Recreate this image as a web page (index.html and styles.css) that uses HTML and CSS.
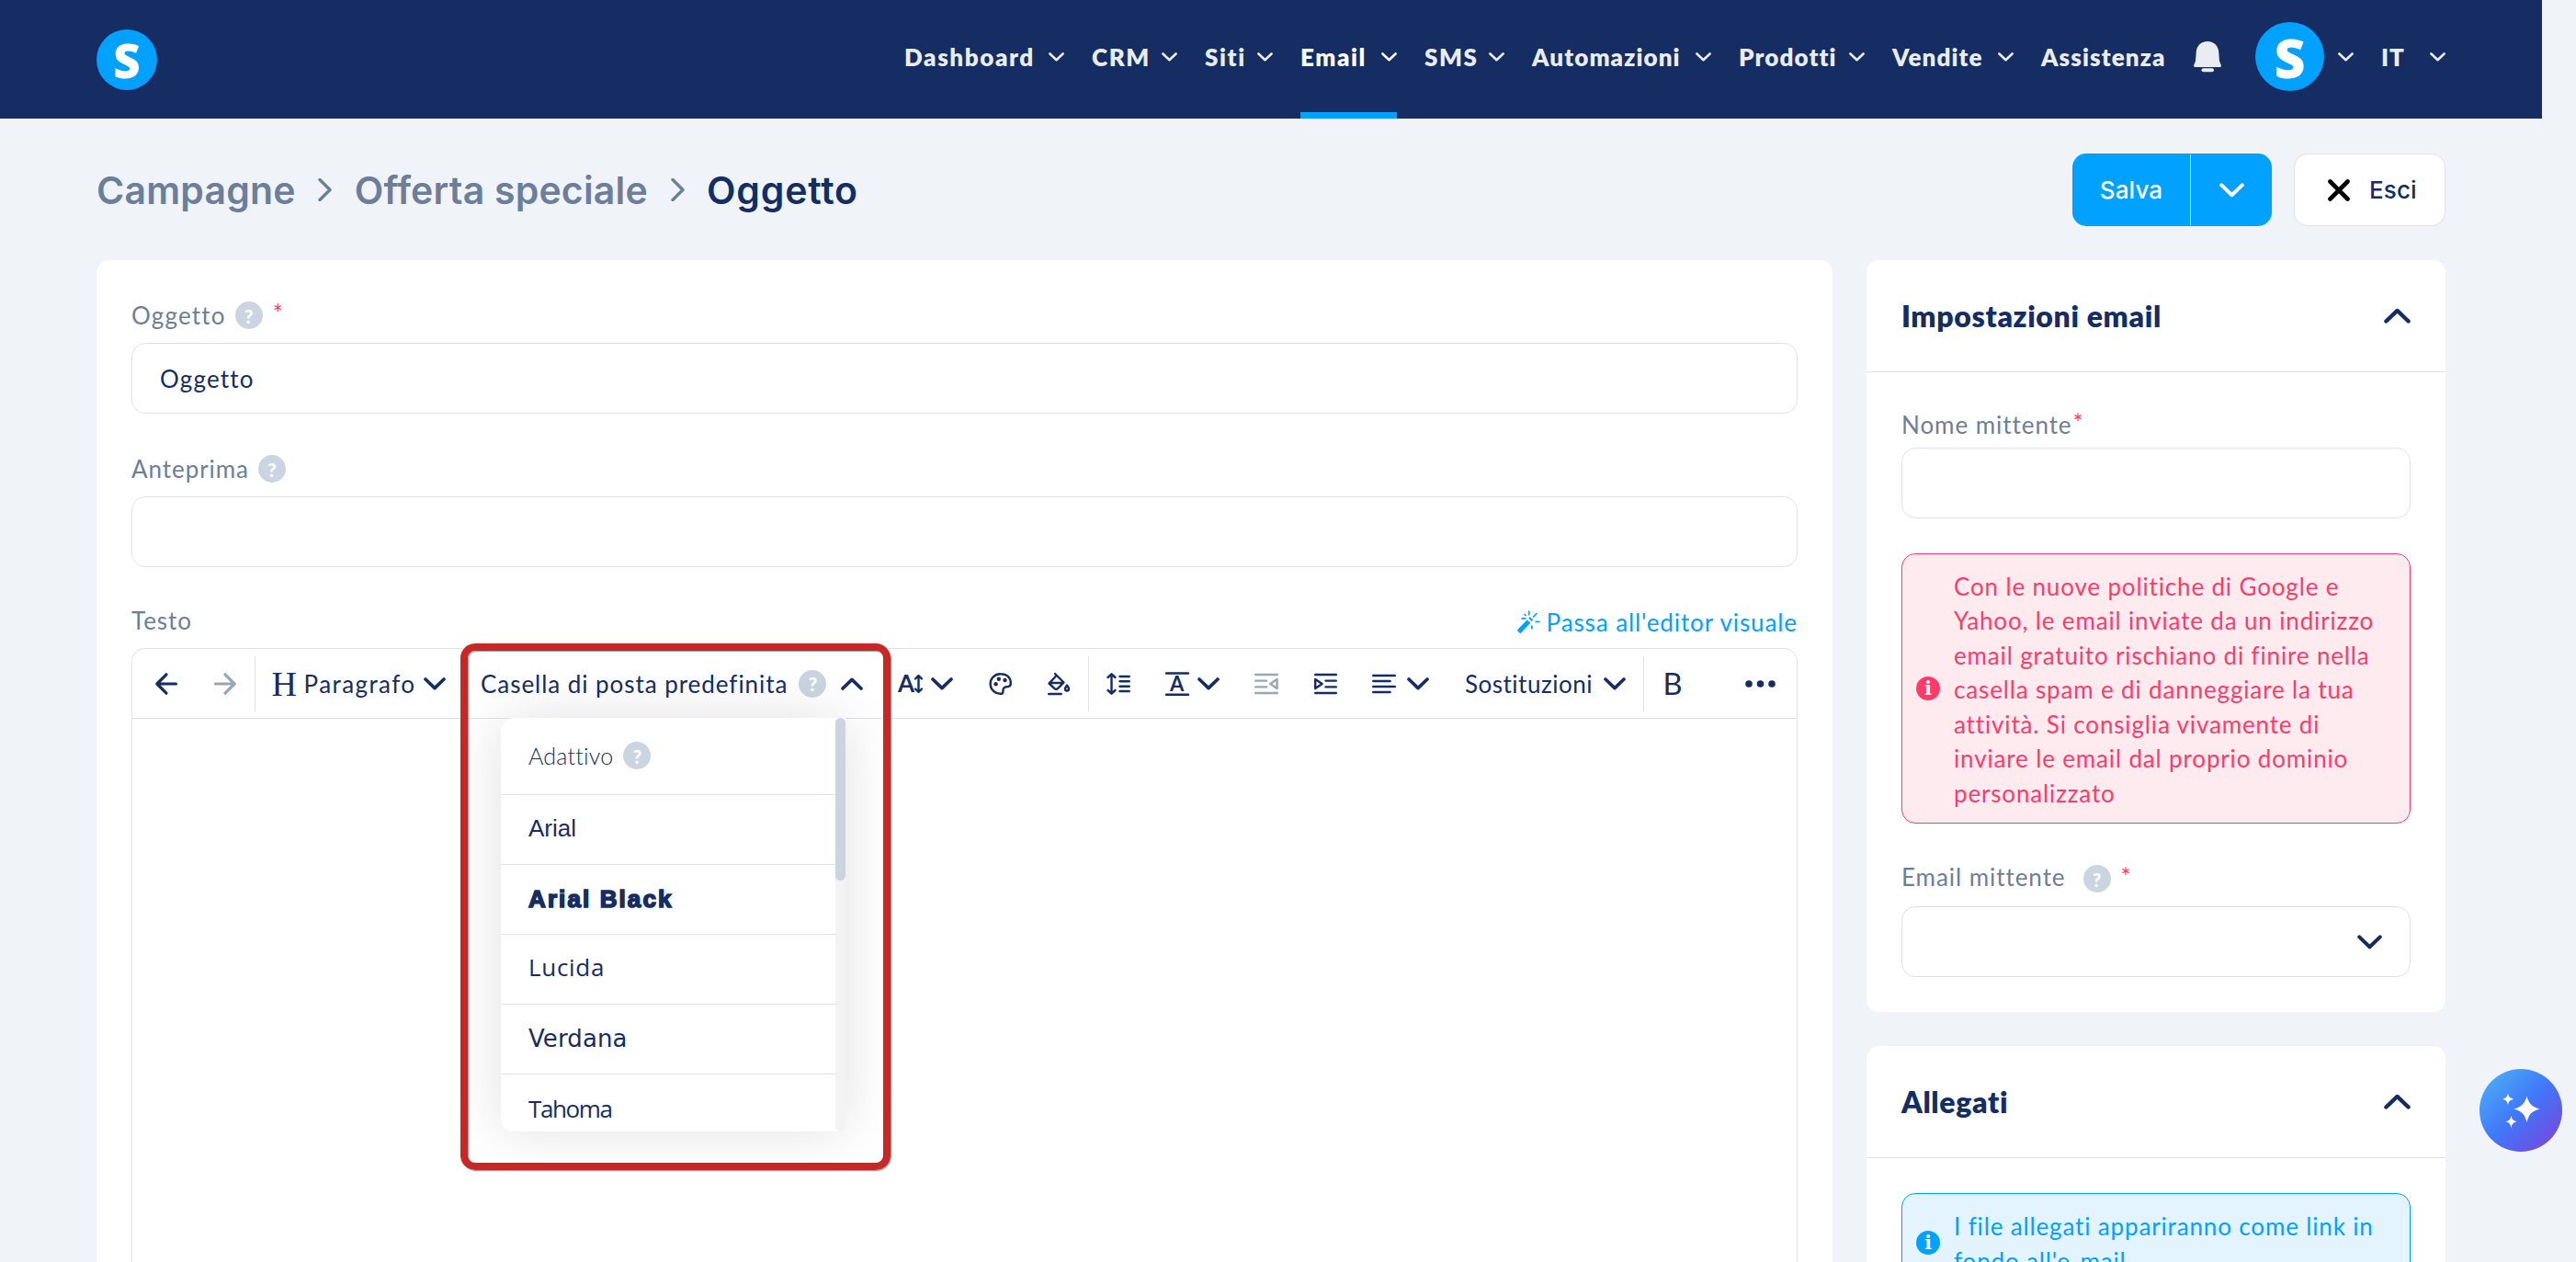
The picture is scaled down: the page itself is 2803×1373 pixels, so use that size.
FILE: index.html
```
<!DOCTYPE html>
<html lang="it">
<head>
  <meta charset="UTF-8">
  <meta name="viewport" content="width=device-width, initial-scale=1.0">
  <title>Oggetto</title>
  <link rel="stylesheet" href="styles.css">
</head>
<body>
  <!-- Shared icons -->
  <svg class="sprite" xmlns="http://www.w3.org/2000/svg">
    <symbol id="down" viewBox="0 0 24 14"><path d="M2 2l10 9.6L22 2"/></symbol>
    <symbol id="up" viewBox="0 0 24 14"><path d="M2 12L12 2.4 22 12"/></symbol>
    <symbol id="right" viewBox="0 0 15 25"><path d="M2 1.5l11 11-11 11"/></symbol>
  </svg>

  <header class="header">
    <a class="logo" href="#">S</a>
    <div class="menu">
      <nav class="nav">
        <a href="#">Dashboard <svg class="arrow"><use href="#down"/></svg></a>
        <a href="#">CRM <svg class="arrow"><use href="#down"/></svg></a>
        <a href="#">Siti <svg class="arrow"><use href="#down"/></svg></a>
        <a href="#" class="active">Email <svg class="arrow"><use href="#down"/></svg></a>
        <a href="#">SMS <svg class="arrow"><use href="#down"/></svg></a>
        <a href="#" class="tight">Automazioni <svg class="arrow"><use href="#down"/></svg></a>
        <a href="#" class="tight">Prodotti <svg class="arrow"><use href="#down"/></svg></a>
        <a href="#" class="tight">Vendite <svg class="arrow"><use href="#down"/></svg></a>
        <a href="#" class="tight">Assistenza</a>
      </nav>
      <svg class="bell" viewBox="0 0 30 34"><path d="M15 0C7.500 0 3.500 5 2.800 11L2 21.500 0.300 25.500C-.3 27 .6 28 2 28H28C29.400 28 30.300 27 29.700 25.500L28 21.500 27.200 11C26.500 5 22.500 0 15 0Z"/><rect x="8.500" y="29.300" width="13.500" height="4" rx="2"/></svg>
      <a class="avatar" href="#">S</a>
      <svg class="arrow"><use href="#down"/></svg>
      <a class="lang" href="#">IT <svg class="arrow"><use href="#down"/></svg></a>
    </div>
  </header>

  <div class="container">
    <div class="title-row">
      <div class="breadcrumbs">
        <a href="#">Campagne</a>
        <svg><use href="#right"/></svg>
        <a href="#">Offerta speciale</a>
        <svg><use href="#right"/></svg>
        <span>Oggetto</span>
      </div>
      <div class="buttons">
        <div class="save">
          <button class="save-main">Salva</button>
          <button class="save-more"><svg><use href="#down"/></svg></button>
        </div>
        <button class="exit"><svg viewBox="0 0 24 24"><path d="M2.500 2.500l19 19M21.500 2.500l-19 19"/></svg>Esci</button>
      </div>
    </div>

    <div class="columns">
      <main class="card main">
        <div class="label subject">Oggetto <i class="help">?</i><b class="req">*</b></div>
        <div class="input">Oggetto</div>
        <div class="label">Anteprima <i class="help">?</i></div>
        <div class="input"></div>
        <div class="label label-text">
          <span>Testo</span>
          <a class="visual" href="#">
            <svg viewBox="0 0 26 26"><path d="M2.500 23.500L13.500 12" stroke-width="5"/><path d="M15 10.300l1.500-1.500" stroke-width="5"/><path d="M18 7.500l4.500-4.500M13.700.5v5M16.800 16.500v4M20.500 12.300h5M5.500 8.800h5M8.500 4l2 2" stroke-width="1.700"/></svg>
            Passa all'editor visuale
          </a>
        </div>

        <!-- Text editor -->
        <div class="editor">
          <div class="toolbar">
            <button class="tool back"><svg width="24" height="24" viewBox="0 0 24 24"><path d="M22.500 12H2M12 1.800L1.800 12 12 22.200"/></svg></button>
            <button class="tool forward"><svg width="24" height="24" viewBox="0 0 24 24"><path d="M1.500 12H22M12 1.800L22.200 12 12 22.200"/></svg></button>
            <span class="sep"></span>
            <button class="tool paragraph"><svg width="26" height="26" viewBox="0 0 26 26"><text class="slab" x="-0.500" y="25.500">H</text></svg><span>Paragrafo</span><svg class="caret"><use href="#down"/></svg></button>
            <div class="tool family">
              <span>Casella di posta predefinita</span><i class="help">?</i><svg class="caret"><use href="#up"/></svg>
              <div class="dropdown">
                <ul>
                  <li class="adaptive">Adattivo <i class="help">?</i></li>
                  <li class="arial">Arial</li>
                  <li class="arial-black">Arial Black</li>
                  <li class="lucida">Lucida</li>
                  <li class="verdana">Verdana</li>
                  <li class="tahoma">Tahoma</li>
                </ul>
                <div class="scroll"><div class="thumb"></div></div>
              </div>
            </div>
            <button class="tool size"><svg width="28" height="24" viewBox="0 0 28 24"><text class="letter" x="0" y="21" font-size="26">A</text><path d="M22.500 3.500v17M19 6.500l3.500-3.500L26 6.500M19 17.500l3.500 3.500 3.500-3.500"/></svg><svg class="caret"><use href="#down"/></svg></button>
            <button class="tool palette"><svg width="24" height="24" viewBox="0 0 24 24"><path d="M12 1.200a10.800 10.800 0 1 0 .8 21.500c1.800-.2 1.600-1.700 1.600-3.200 0-2.500 1.200-4.300 3.800-4.300 3 0 4.600-.8 4.600-4C22.800 5.200 18.500 1.200 12 1.200z"/><g class="solid"><circle cx="9.800" cy="6.700" r="2.200"/><circle cx="16.500" cy="8" r="2.200"/><circle cx="6.600" cy="12.300" r="2.200"/></g></svg></button>
            <button class="tool fill"><svg width="25" height="24" viewBox="0 0 25 24"><path d="M8 1l9.500 9.500-6.300 6.300q-2 1.700-4 0L1.500 11.500 9 3.500M2 11h15M21 13.500c-1.500 2.200-2 3-2 4a2 2 0 0 0 4 0c0-1-.5-1.800-2-4zM1.200 23h13.500"/></svg></button>
            <span class="sep"></span>
            <button class="tool line-height"><svg width="26" height="24" viewBox="0 0 26 24"><path d="M5.500 2v20M1.500 5l4-3.700L9.500 5M1.500 19l4 3.700 4-3.700M14.500 4h10.200M14.500 9.300h10.200M14.500 14.700h10.200M14.500 20h10.200"/></svg></button>
            <button class="tool valign"><svg width="26" height="26" viewBox="0 0 26 26"><text class="letter" x="5" y="20.500" font-size="22">A</text><path d="M1 1.500h24M1 24.800h24"/></svg><svg class="caret"><use href="#down"/></svg></button>
            <button class="tool outdent"><svg width="26" height="24" viewBox="0 0 26 24"><path d="M1.200 2h23.600M1.200 8.600h12M1.200 15.400h12M1.200 22h23.600M24.600 7l-7.400 5 7.400 5z"/></svg></button>
            <button class="tool indent"><svg width="25" height="24" viewBox="0 0 25 24"><path d="M1.200 2h22.600M12.500 8.600h11.300M12.500 15.400h11.300M1.200 22h22.600M1.200 7l7.400 5-7.400 5z"/></svg></button>
            <button class="tool align"><svg width="26" height="24" viewBox="0 0 26 24"><path d="M1.200 3h23.600M1.200 9h18.400M1.200 15h23.600M1.200 21h18.400"/></svg><svg class="caret"><use href="#down"/></svg></button>
            <button class="tool subst"><span>Sostituzioni</span><svg class="caret"><use href="#down"/></svg></button>
            <span class="sep"></span>
            <button class="tool bold"><svg width="20" height="24" viewBox="0 0 20 24"><text class="letter thin" x="-1.500" y="23.500" font-size="32.500">B</text></svg></button>
            <button class="tool more"><svg width="33" height="8" viewBox="0 0 33 8"><g class="solid"><circle cx="4" cy="4" r="3.800"/><circle cx="16.500" cy="4" r="3.800"/><circle cx="29" cy="4" r="3.800"/></g></svg></button>
          </div>
          <div class="highlight"></div>
        </div>
      </main>

      <aside class="side">
        <section class="card">
          <div class="card-header"><h2>Impostazioni email</h2><svg><use href="#up"/></svg></div>
          <div class="card-body">
            <div class="label name-label">Nome mittente<b class="req">*</b></div>
            <div class="input"></div>
            <div class="alert alert-danger">
              <i class="info">i</i>
              <p>Con le nuove politiche di Google e<br>Yahoo, le email inviate da un indirizzo<br>email gratuito rischiano di finire nella<br>casella spam e di danneggiare la tua<br>attività. Si consiglia vivamente di<br>inviare le email dal proprio dominio<br>personalizzato</p>
            </div>
            <div class="label sender-label"><span>Email mittente</span> <i class="help">?</i><b class="req">*</b></div>
            <div class="input select"><svg><use href="#down"/></svg></div>
          </div>
        </section>
        <section class="card">
          <div class="card-header"><h2>Allegati</h2><svg><use href="#up"/></svg></div>
          <div class="card-body">
            <div class="alert alert-info">
              <i class="info">i</i>
              <p>I file allegati appariranno come link in<br>fondo all'e-mail</p>
            </div>
          </div>
        </section>
      </aside>
    </div>
  </div>

  <button class="assistant">
    <svg viewBox="0 0 90 90"><path d="M51.500 29.500C54 38 56 40.500 65.500 43.500 56 46.500 54 49 51.500 58 49 49 46.500 46.500 37.500 43.500 46.500 40.500 49 38 51.500 29.500ZM31 26.500C32 30.500 33 31.600 37.200 32.700 33 33.800 32 35 31 39 30 35 29 33.800 25 32.700 29 31.600 30 30.500 31 26.500ZM34.500 51C35.500 55 36.500 56 40.500 57.200 36.500 58.400 35.500 59.500 34.500 64 33.500 59.500 32.500 58.400 28.800 57.200 32.500 56 33.500 55 34.500 51Z"/></svg>
  </button>
</body>
</html>
```
FILE: styles.css
```
* {
  box-sizing: border-box;
}
body {
  margin: 0;
  height: 1373px;
  overflow: hidden;
  background: #f0f4f9;
  color: #152d62;
  font-family: Lato, sans-serif;
  font-size: 26px;
  letter-spacing: 0.95px;
}
a {
  color: inherit;
  text-decoration: none;
}
button {
  padding: 0;
  border: none;
  background: none;
  color: inherit;
  font: inherit;
  letter-spacing: inherit;
}
svg {
  display: block;
  flex-shrink: 0;
  fill: none;
  stroke: currentColor;
  stroke-width: 3.6;
  stroke-linecap: round;
  stroke-linejoin: round;
}
i, b {
  font-style: normal;
}
.sprite {
  position: absolute;
  width: 0;
  height: 0;
}

/* Header */
.header {
  display: flex;
  justify-content: space-between;
  width: 2766px;
  height: 129px;
  padding: 0 105px;
  background: #152d62;
  color: #e9edf1;
}
.logo, .avatar {
  display: flex;
  align-items: center;
  justify-content: center;
  border-radius: 50%;
  background: #00a1ff;
  color: #fff;
  font-family: "Open Sans", sans-serif;
  font-weight: 800;
  letter-spacing: 0;
}
.logo {
  width: 66px;
  height: 66px;
  margin-top: 32px;
  font-size: 51px;
}
.avatar {
  width: 75px;
  height: 75px;
  margin: 0 15px 0 37px;
  font-size: 59px;
}
.menu {
  display: flex;
  align-items: center;
  height: 123px;
}
.nav {
  display: grid;
  grid-template-columns: 174px 93px 74px 105px 87px 195px 137px 132px 136px;
  gap: 30px;
  margin-right: 30px;
  font-weight: 800;
  font-size: 26px;
  letter-spacing: 1.6px;
}
.nav a {
  display: flex;
  align-items: center;
  justify-content: space-between;
  height: 129px;
  margin-top: 6px;
  padding-bottom: 6px;
  white-space: nowrap;
}
.nav .tight {
  letter-spacing: 1.1px;
}
.nav .active {
  position: relative;
  color: #fff;
}
.nav .active::after {
  content: "";
  position: absolute;
  left: 0;
  bottom: 0;
  width: 100%;
  height: 7px;
  background: #00a1ff;
}
.arrow {
  width: 17px;
  height: 10px;
}
.bell {
  width: 30px;
  height: 34px;
  fill: #e9edf1;
  stroke: none;
}
.lang {
  display: flex;
  align-items: center;
  justify-content: space-between;
  width: 70px;
  margin-left: 30px;
  font-weight: 800;
}

/* Title */
.container {
  width: 2556px;
  margin-left: 105px;
  padding-top: 38px;
}
.title-row {
  display: flex;
  justify-content: space-between;
  align-items: center;
  height: 79px;
  margin-bottom: 37px;
}
.breadcrumbs {
  display: flex;
  align-items: center;
  font-family: Inter, sans-serif;
  font-size: 41px;
  font-weight: 600;
  letter-spacing: 0.2px;
  color: #6c7e99;
}
.breadcrumbs svg {
  width: 15px;
  height: 25px;
  margin: 0 24.5px;
  stroke-width: 3.4;
}
.breadcrumbs span {
  color: #152d62;
  letter-spacing: 0.8px;
}
.buttons {
  display: flex;
  gap: 24px;
  font-family: Inter, sans-serif;
  font-size: 26px;
  font-weight: 500;
  letter-spacing: 0.1px;
}
.save {
  display: flex;
  width: 217px;
  height: 79px;
  border-radius: 15px;
  background: #00a1ff;
  color: #fff;
}
.save-main {
  width: 129px;
  height: 77px;
  margin-top: 1px;
  border-right: 1px solid #bfe6ff;
}
.save-more {
  flex: 1;
  display: flex;
  align-items: center;
  justify-content: center;
}
.save-more svg {
  width: 27px;
  height: 16px;
}
.exit {
  display: flex;
  align-items: center;
  gap: 21px;
  width: 165px;
  height: 79px;
  padding-left: 36px;
  border: 1px solid #dfe3e7;
  border-radius: 15px;
  background: #fff;
}
.exit svg {
  width: 24px;
  height: 24px;
  stroke: #000;
  stroke-width: 4.6;
}

/* Cards */
.columns {
  display: flex;
  gap: 37px;
  height: 1090px;
}
.card {
  border-radius: 14px;
  background: #fff;
}
.main {
  display: flex;
  flex-direction: column;
  width: 1889px;
  height: 1090px;
  padding: 45px 38px 0;
  border-radius: 14px 14px 0 0;
}
.side {
  display: flex;
  flex-direction: column;
  gap: 37px;
  width: 630px;
}
.card-header {
  display: flex;
  align-items: center;
  justify-content: space-between;
  height: 122px;
  padding: 0 38px;
  border-bottom: 1px solid #dfe3e7;
}
.card-header svg {
  width: 29px;
  height: 17px;
}
.card-header h2 {
  margin: 0;
  font-size: 32px;
  font-weight: 800;
  letter-spacing: 0.65px;
}
.card-body {
  padding: 38px;
}

/* Form */
.label {
  display: flex;
  align-items: center;
  flex-shrink: 0;
  height: 30px;
  margin-bottom: 15px;
  color: #6c7e99;
}
.input {
  display: flex;
  align-items: center;
  flex-shrink: 0;
  height: 77px;
  margin-bottom: 45px;
  padding: 0 30px;
  border: 1px solid #dfe3e7;
  border-radius: 15px;
  letter-spacing: 1.2px;
}
.help {
  display: flex;
  align-items: center;
  justify-content: center;
  flex-shrink: 0;
  width: 30px;
  height: 30px;
  margin-left: 10px;
  border-radius: 50%;
  background: #cbd5e2;
  color: #fff;
  font-size: 21px;
  font-weight: 900;
  letter-spacing: 0;
}
.req {
  margin: -4px 0 0 11px;
  color: #ff3b69;
  font-weight: 400;
}
.subject {
  letter-spacing: 1.2px;
}
.label-text {
  justify-content: space-between;
  margin-top: -2px;
}
.visual {
  display: flex;
  align-items: center;
  gap: 7px;
  padding-top: 3px;
  color: #00a1ff;
  letter-spacing: 0.9px;
}
.visual svg {
  width: 26px;
  height: 26px;
  stroke-linecap: butt;
}
.name-label {
  margin: 4px 0 10px;
}
.name-label .req {
  margin-left: 1px;
}
.sender-label .help {
  margin-left: 19px;
}
.sender-label span {
  margin-top: -4px;
}
.side .input {
  margin-bottom: 38px;
}
.side .select {
  justify-content: flex-end;
  margin-bottom: 0;
}
.select svg {
  width: 27px;
  height: 16px;
}
.alert {
  display: flex;
  align-items: center;
  gap: 15px;
  padding: 15px;
  border: 1px solid;
  border-radius: 15px;
}
.alert p {
  margin: 2px 0 -2px;
  line-height: 37.5px;
  letter-spacing: 0.85px;
  white-space: nowrap;
}
.alert-danger {
  height: 294px;
  margin-bottom: 45px;
  border-color: #ff3b69;
  background: #feebf0;
  color: #ff3b69;
}
.alert-info {
  border-color: #00a1ff;
  background: #e3f4ff;
  color: #00a1ff;
}
.info {
  width: 26px;
  height: 26px;
  border-radius: 50%;
  color: #fff;
  font: 700 20px/26px "DejaVu Serif", serif;
  letter-spacing: 0;
  text-align: center;
}
.alert-danger .info {
  background: #ff3b69;
}
.alert-info .info {
  background: #00a1ff;
}

/* Editor */
.editor {
  position: relative;
  flex: 1;
  border: 1px solid #dfe3e7;
  border-bottom: none;
  border-radius: 15px 15px 0 0;
}
.toolbar {
  display: flex;
  align-items: center;
  height: 76px;
  padding: 0 23px 0 25px;
  border-bottom: 1px solid #dfe3e7;
}
.sep {
  width: 1px;
  height: 60px;
  margin-left: 19px;
  background: #dfe3e7;
}
.tool {
  display: flex;
  align-items: center;
  justify-content: space-between;
  flex-shrink: 0;
  margin-left: 39px;
  white-space: nowrap;
}
.tool svg {
  overflow: visible;
  stroke-width: 2.4;
}
.tool .caret {
  width: 24px;
  height: 14px;
  stroke-width: 3.6;
}
.tool .solid {
  fill: currentColor;
  stroke: none;
}
.tool text {
  fill: currentColor;
  stroke: none;
  letter-spacing: 0;
}
.tool .slab {
  font-family: "Liberation Serif", serif;
  font-size: 38px;
}
.letter {
  font-family: Lato, sans-serif;
  font-weight: 700;
}
.letter.thin {
  font-weight: 400;
}
.back {
  margin-left: 0;
}
.back svg, .forward svg {
  stroke-width: 3.2;
}
.forward {
  margin-left: 40px;
}
.forward, .outdent {
  color: #98a7b3;
}
.forward + .sep {
  margin-left: 20px;
}
.paragraph {
  width: 189px;
  margin-left: 18px;
  letter-spacing: 1.4px;
}
.family {
  position: relative;
  width: 416px;
  margin-left: 38px;
}
.family > .help {
  margin-left: 12px;
}
.family > .caret {
  margin-left: auto;
}
.size {
  width: 60px;
  margin-left: 38px;
}
.palette {
  margin-left: 40px;
}
.line-height {
  margin-left: 19px;
}
.valign {
  width: 59px;
  margin-left: 38px;
}
.outdent, .align {
  margin-left: 38px;
}
.align {
  width: 62px;
}
.subst {
  width: 175px;
  letter-spacing: 0.5px;
}
.bold {
  margin-left: 22px;
}
.more {
  margin-left: auto;
}

/* Font list */
.dropdown {
  position: absolute;
  top: 53px;
  left: 22px;
  z-index: 1;
  display: flex;
  width: 375px;
  height: 450px;
  border-radius: 14px 0 6px 14px;
  background: #fff;
  box-shadow: 0 0 60px rgba(0, 0, 0, 0.12);
}
.dropdown ul {
  flex: 1;
  margin: 0;
  padding: 0;
  overflow: hidden;
  list-style: none;
}
.dropdown li {
  display: flex;
  align-items: center;
  height: 76px;
  padding-left: 30px;
  border-bottom: 1px solid #dfe3e7;
  font-size: 26px;
  letter-spacing: 0;
}
.dropdown .adaptive {
  height: 84px;
  font-size: 25px;
  font-weight: 300;
  letter-spacing: 0.2px;
}
.dropdown .adaptive .help {
  margin-left: 11px;
}
.dropdown .arial {
  padding-bottom: 2px;
  font-family: "Liberation Sans", sans-serif;
}
.dropdown .arial-black {
  font-family: "Liberation Sans", sans-serif;
  font-weight: 700;
  letter-spacing: 2.1px;
  -webkit-text-stroke: 1.6px #152d62;
}
.dropdown .lucida {
  padding-bottom: 4px;
  font-family: "Open Sans", sans-serif;
  letter-spacing: 0.7px;
}
.dropdown .verdana {
  font-family: "DejaVu Sans", sans-serif;
  letter-spacing: 0.1px;
}
.dropdown .tahoma {
  font-family: "Open Sans", sans-serif;
  letter-spacing: -1.4px;
}
.scroll {
  width: 11px;
  border-radius: 6px;
  background: #f3f3f3;
}
.thumb {
  height: 177px;
  border-radius: 6px;
  background: #cbd5e2;
}
.highlight {
  position: absolute;
  top: -6px;
  left: 357px;
  z-index: 2;
  width: 468px;
  height: 573px;
  border: 8px solid #c62828;
  border-radius: 16px;
  box-shadow: 1px 1px 1px rgba(0, 0, 0, 0.4), inset 1px 1px 1px rgba(0, 0, 0, 0.4);
}

/* Assistant button */
.assistant {
  position: fixed;
  top: 1163px;
  left: 2698px;
  width: 90px;
  height: 90px;
  border-radius: 50%;
  background: linear-gradient(135deg, #4da9f5 10%, #3f78fa 50%, #7a44dc 95%);
}
.assistant svg {
  fill: #fff;
  stroke: none;
}
```
